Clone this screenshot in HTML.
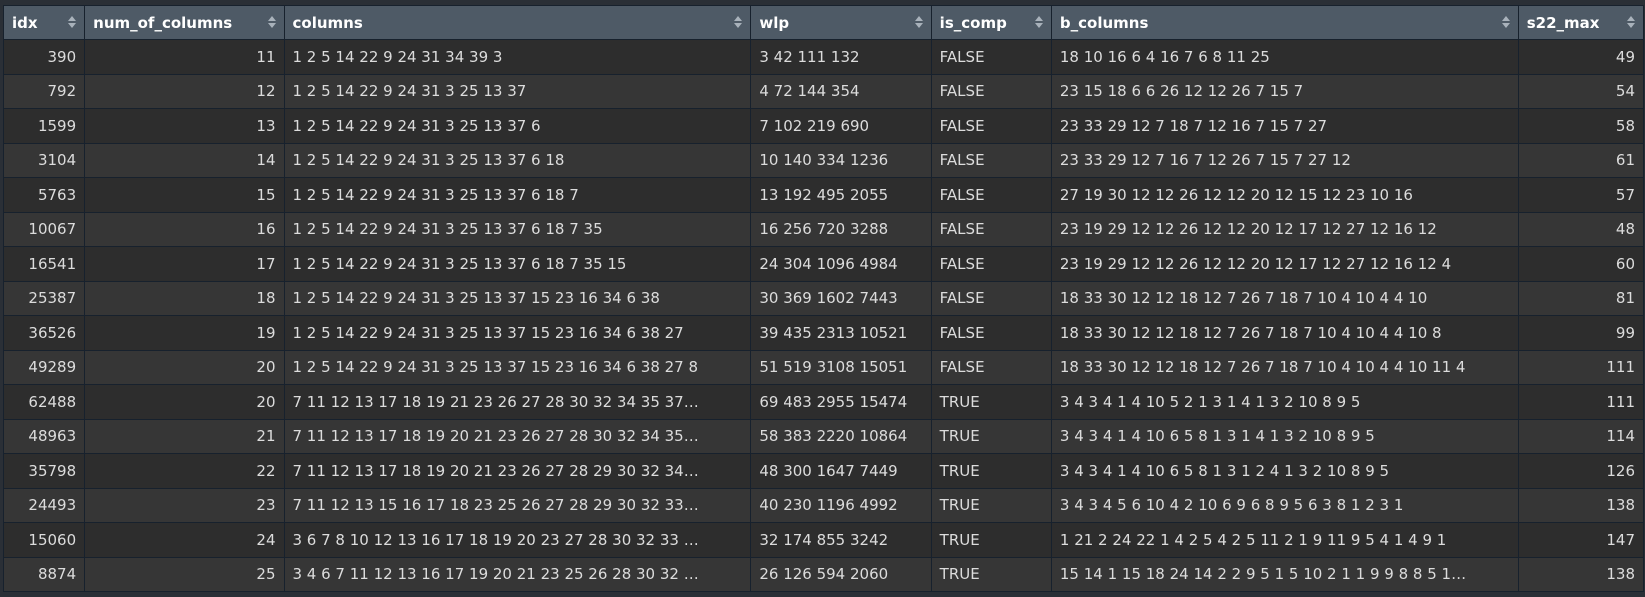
<!DOCTYPE html>
<html><head><meta charset="utf-8"><style>
html,body{margin:0;padding:0;background:#2a2f36;width:1645px;height:597px;overflow:hidden}
.wrap{position:absolute;left:0;top:5px;width:1645px}
table{border-collapse:collapse;table-layout:fixed;width:1641px;margin-left:3px;font-family:"DejaVu Sans","Liberation Sans",sans-serif;font-size:15px}
th,td{border:1px solid #17212d;padding:0 8px;white-space:nowrap;overflow:hidden;text-overflow:ellipsis}
th{background:#4e5a66;color:#fff;font-weight:bold;text-align:left;height:33px;position:relative}
th .s{position:absolute;right:8px;top:9px;width:8px;height:14px}
td{color:#dcdcdc;height:33.5px}
tr:nth-child(odd) td{background:#2d2d2d}
tr:nth-child(even) td{background:#363636}
.r{text-align:right}
</style></head><body><div class="wrap">
<table>
<colgroup><col style="width:81px"><col style="width:199px"><col style="width:466px"><col style="width:180px"><col style="width:120px"><col style="width:466px"><col style="width:125px"></colgroup>
<thead><tr>
<th>idx<svg class="s" viewBox="0 0 8 14"><path d="M0 6L4 1L8 6Z M0 8L4 13L8 8Z" fill="#a9b2bb"/></svg></th>
<th>num_of_columns<svg class="s" viewBox="0 0 8 14"><path d="M0 6L4 1L8 6Z M0 8L4 13L8 8Z" fill="#a9b2bb"/></svg></th>
<th>columns<svg class="s" viewBox="0 0 8 14"><path d="M0 6L4 1L8 6Z M0 8L4 13L8 8Z" fill="#a9b2bb"/></svg></th>
<th>wlp<svg class="s" viewBox="0 0 8 14"><path d="M0 6L4 1L8 6Z M0 8L4 13L8 8Z" fill="#a9b2bb"/></svg></th>
<th>is_comp<svg class="s" viewBox="0 0 8 14"><path d="M0 6L4 1L8 6Z M0 8L4 13L8 8Z" fill="#a9b2bb"/></svg></th>
<th>b_columns<svg class="s" viewBox="0 0 8 14"><path d="M0 6L4 1L8 6Z M0 8L4 13L8 8Z" fill="#a9b2bb"/></svg></th>
<th>s22_max<svg class="s" viewBox="0 0 8 14"><path d="M0 6L4 1L8 6Z M0 8L4 13L8 8Z" fill="#a9b2bb"/></svg></th>
</tr></thead>
<tbody>
<tr><td class="r">390</td><td class="r">11</td><td>1 2 5 14 22 9 24 31 34 39 3</td><td>3 42 111 132</td><td>FALSE</td><td>18 10 16 6 4 16 7 6 8 11 25</td><td class="r">49</td></tr>
<tr><td class="r">792</td><td class="r">12</td><td>1 2 5 14 22 9 24 31 3 25 13 37</td><td>4 72 144 354</td><td>FALSE</td><td>23 15 18 6 6 26 12 12 26 7 15 7</td><td class="r">54</td></tr>
<tr><td class="r">1599</td><td class="r">13</td><td>1 2 5 14 22 9 24 31 3 25 13 37 6</td><td>7 102 219 690</td><td>FALSE</td><td>23 33 29 12 7 18 7 12 16 7 15 7 27</td><td class="r">58</td></tr>
<tr><td class="r">3104</td><td class="r">14</td><td>1 2 5 14 22 9 24 31 3 25 13 37 6 18</td><td>10 140 334 1236</td><td>FALSE</td><td>23 33 29 12 7 16 7 12 26 7 15 7 27 12</td><td class="r">61</td></tr>
<tr><td class="r">5763</td><td class="r">15</td><td>1 2 5 14 22 9 24 31 3 25 13 37 6 18 7</td><td>13 192 495 2055</td><td>FALSE</td><td>27 19 30 12 12 26 12 12 20 12 15 12 23 10 16</td><td class="r">57</td></tr>
<tr><td class="r">10067</td><td class="r">16</td><td>1 2 5 14 22 9 24 31 3 25 13 37 6 18 7 35</td><td>16 256 720 3288</td><td>FALSE</td><td>23 19 29 12 12 26 12 12 20 12 17 12 27 12 16 12</td><td class="r">48</td></tr>
<tr><td class="r">16541</td><td class="r">17</td><td>1 2 5 14 22 9 24 31 3 25 13 37 6 18 7 35 15</td><td>24 304 1096 4984</td><td>FALSE</td><td>23 19 29 12 12 26 12 12 20 12 17 12 27 12 16 12 4</td><td class="r">60</td></tr>
<tr><td class="r">25387</td><td class="r">18</td><td>1 2 5 14 22 9 24 31 3 25 13 37 15 23 16 34 6 38</td><td>30 369 1602 7443</td><td>FALSE</td><td>18 33 30 12 12 18 12 7 26 7 18 7 10 4 10 4 4 10</td><td class="r">81</td></tr>
<tr><td class="r">36526</td><td class="r">19</td><td>1 2 5 14 22 9 24 31 3 25 13 37 15 23 16 34 6 38 27</td><td>39 435 2313 10521</td><td>FALSE</td><td>18 33 30 12 12 18 12 7 26 7 18 7 10 4 10 4 4 10 8</td><td class="r">99</td></tr>
<tr><td class="r">49289</td><td class="r">20</td><td>1 2 5 14 22 9 24 31 3 25 13 37 15 23 16 34 6 38 27 8</td><td>51 519 3108 15051</td><td>FALSE</td><td>18 33 30 12 12 18 12 7 26 7 18 7 10 4 10 4 4 10 11 4</td><td class="r">111</td></tr>
<tr><td class="r">62488</td><td class="r">20</td><td>7 11 12 13 17 18 19 21 23 26 27 28 30 32 34 35 37…</td><td>69 483 2955 15474</td><td>TRUE</td><td>3 4 3 4 1 4 10 5 2 1 3 1 4 1 3 2 10 8 9 5</td><td class="r">111</td></tr>
<tr><td class="r">48963</td><td class="r">21</td><td>7 11 12 13 17 18 19 20 21 23 26 27 28 30 32 34 35…</td><td>58 383 2220 10864</td><td>TRUE</td><td>3 4 3 4 1 4 10 6 5 8 1 3 1 4 1 3 2 10 8 9 5</td><td class="r">114</td></tr>
<tr><td class="r">35798</td><td class="r">22</td><td>7 11 12 13 17 18 19 20 21 23 26 27 28 29 30 32 34…</td><td>48 300 1647 7449</td><td>TRUE</td><td>3 4 3 4 1 4 10 6 5 8 1 3 1 2 4 1 3 2 10 8 9 5</td><td class="r">126</td></tr>
<tr><td class="r">24493</td><td class="r">23</td><td>7 11 12 13 15 16 17 18 23 25 26 27 28 29 30 32 33…</td><td>40 230 1196 4992</td><td>TRUE</td><td>3 4 3 4 5 6 10 4 2 10 6 9 6 8 9 5 6 3 8 1 2 3 1</td><td class="r">138</td></tr>
<tr><td class="r">15060</td><td class="r">24</td><td>3 6 7 8 10 12 13 16 17 18 19 20 23 27 28 30 32 33 …</td><td>32 174 855 3242</td><td>TRUE</td><td>1 21 2 24 22 1 4 2 5 4 2 5 11 2 1 9 11 9 5 4 1 4 9 1</td><td class="r">147</td></tr>
<tr><td class="r">8874</td><td class="r">25</td><td>3 4 6 7 11 12 13 16 17 19 20 21 23 25 26 28 30 32 …</td><td>26 126 594 2060</td><td>TRUE</td><td>15 14 1 15 18 24 14 2 2 9 5 1 5 10 2 1 1 9 9 8 8 5 1…</td><td class="r">138</td></tr>
</tbody></table></div></body></html>
